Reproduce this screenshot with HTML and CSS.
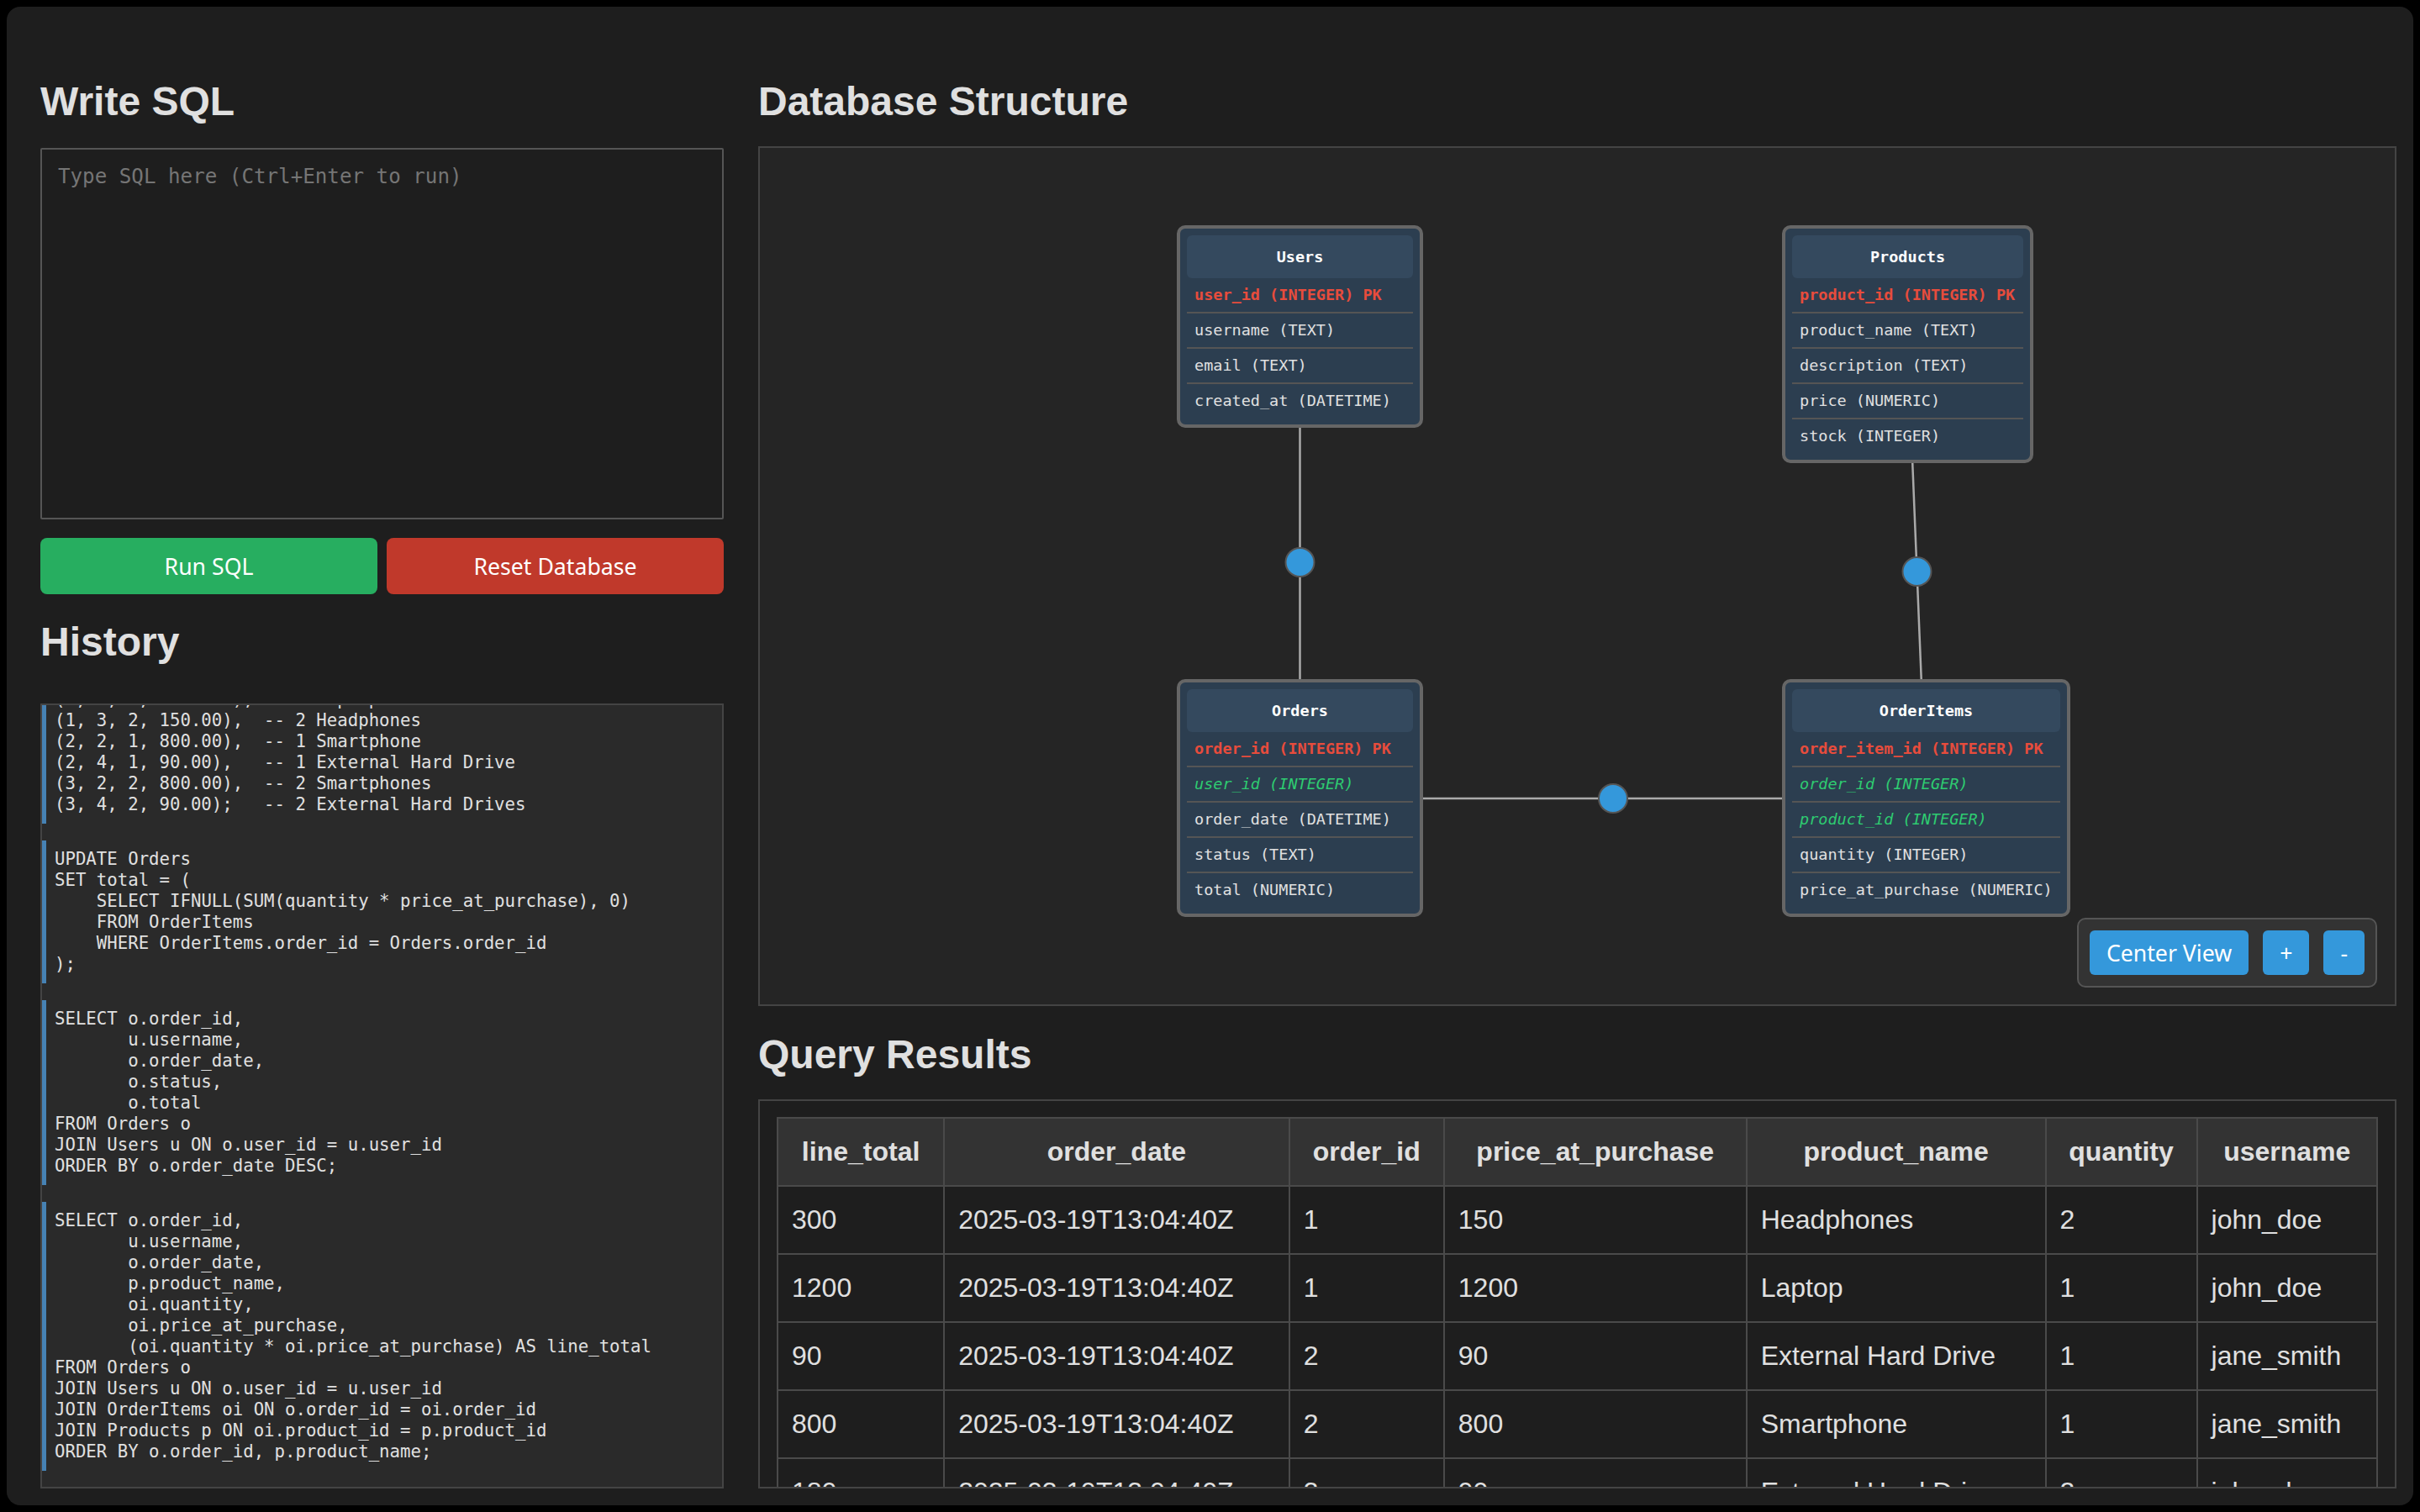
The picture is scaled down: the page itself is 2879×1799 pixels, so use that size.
FILE: index.html
```html
<!DOCTYPE html>
<html lang="en">
<head>
<meta charset="utf-8">
<title>SQL Playground</title>
<link rel="stylesheet" href="styles.css">
</head>
<body>
<div class="app">
  <section class="col col-left">
    <h2 class="title title-editor">Write SQL</h2>
    <textarea class="editor" placeholder="Type SQL here (Ctrl+Enter to run)"></textarea>
    <div class="actions">
      <button class="btn btn-run">Run SQL</button>
      <button class="btn btn-reset">Reset Database</button>
    </div>
    <h2 class="title title-history">History</h2>
    <div class="history">
<pre class="entry">SELECT o.order_id,
       u.username,
       o.order_date,
       p.product_name,
       oi.quantity,
       oi.price_at_purchase,
       (oi.quantity * oi.price_at_purchase) AS line_total
FROM Orders o
JOIN Users u ON o.user_id = u.user_id
JOIN OrderItems oi ON o.order_id = oi.order_id
JOIN Products p ON oi.product_id = p.product_id
ORDER BY o.order_id, p.product_name;</pre>
<pre class="entry">SELECT o.order_id,
       u.username,
       o.order_date,
       o.status,
       o.total
FROM Orders o
JOIN Users u ON o.user_id = u.user_id
ORDER BY o.order_date DESC;</pre>
<pre class="entry">UPDATE Orders
SET total = (
    SELECT IFNULL(SUM(quantity * price_at_purchase), 0)
    FROM OrderItems
    WHERE OrderItems.order_id = Orders.order_id
);</pre>
<pre class="entry">INSERT INTO OrderItems (order_id, product_id, quantity, price_at_purchase)
VALUES
(1, 1, 1, 1200.00), -- 1 Laptop
(1, 3, 2, 150.00),  -- 2 Headphones
(2, 2, 1, 800.00),  -- 1 Smartphone
(2, 4, 1, 90.00),   -- 1 External Hard Drive
(3, 2, 2, 800.00),  -- 2 Smartphones
(3, 4, 2, 90.00);   -- 2 External Hard Drives</pre>
<pre class="entry">INSERT INTO Orders (user_id, status)
VALUES
(1, 'shipped'),
(2, 'pending'),
(1, 'pending');</pre>
    </div>
  </section>

  <section class="col col-right">
    <h2 class="title title-diagram">Database Structure</h2>
    <div class="diagram">
      <svg class="links" xmlns="http://www.w3.org/2000/svg">
        <line x1="642.5" y1="212.5" x2="642.5" y2="774"/>
        <line x1="1365.5" y1="234" x2="1387.5" y2="774"/>
        <line x1="642.5" y1="774" x2="1387.5" y2="774"/>
        <circle cx="642.5" cy="493" r="17"/>
        <circle cx="1376.5" cy="504" r="17"/>
        <circle cx="1015" cy="774" r="17"/>
      </svg>

      <div class="node node-users">
        <div class="node-head">Users</div>
        <div class="field pk">user_id (INTEGER) PK</div>
        <div class="field">username (TEXT)</div>
        <div class="field">email (TEXT)</div>
        <div class="field">created_at (DATETIME)</div>
      </div>

      <div class="node node-products">
        <div class="node-head">Products</div>
        <div class="field pk">product_id (INTEGER) PK</div>
        <div class="field">product_name (TEXT)</div>
        <div class="field">description (TEXT)</div>
        <div class="field">price (NUMERIC)</div>
        <div class="field">stock (INTEGER)</div>
      </div>

      <div class="node node-orders">
        <div class="node-head">Orders</div>
        <div class="field pk">order_id (INTEGER) PK</div>
        <div class="field fk">user_id (INTEGER)</div>
        <div class="field">order_date (DATETIME)</div>
        <div class="field">status (TEXT)</div>
        <div class="field">total (NUMERIC)</div>
      </div>

      <div class="node node-orderitems">
        <div class="node-head">OrderItems</div>
        <div class="field pk">order_item_id (INTEGER) PK</div>
        <div class="field fk">order_id (INTEGER)</div>
        <div class="field fk">product_id (INTEGER)</div>
        <div class="field">quantity (INTEGER)</div>
        <div class="field">price_at_purchase (NUMERIC)</div>
      </div>

      <div class="controls">
        <button class="ctrl">Center View</button>
        <button class="ctrl">+</button>
        <button class="ctrl">-</button>
      </div>
    </div>

    <h2 class="title title-results">Query Results</h2>
    <div class="results">
      <table class="grid">
        <thead>
          <tr>
            <th>line_total</th>
            <th>order_date</th>
            <th>order_id</th>
            <th>price_at_purchase</th>
            <th>product_name</th>
            <th>quantity</th>
            <th>username</th>
          </tr>
        </thead>
        <tbody>
          <tr><td>300</td><td>2025-03-19T13:04:40Z</td><td>1</td><td>150</td><td>Headphones</td><td>2</td><td>john_doe</td></tr>
          <tr><td>1200</td><td>2025-03-19T13:04:40Z</td><td>1</td><td>1200</td><td>Laptop</td><td>1</td><td>john_doe</td></tr>
          <tr><td>90</td><td>2025-03-19T13:04:40Z</td><td>2</td><td>90</td><td>External Hard Drive</td><td>1</td><td>jane_smith</td></tr>
          <tr><td>800</td><td>2025-03-19T13:04:40Z</td><td>2</td><td>800</td><td>Smartphone</td><td>1</td><td>jane_smith</td></tr>
          <tr><td>180</td><td>2025-03-19T13:04:40Z</td><td>3</td><td>90</td><td>External Hard Drive</td><td>2</td><td>john_doe</td></tr>
          <tr><td>1600</td><td>2025-03-19T13:04:40Z</td><td>3</td><td>800</td><td>Smartphone</td><td>2</td><td>john_doe</td></tr>
        </tbody>
      </table>
    </div>
  </section>
</div>
</body>
</html>
```

FILE: styles.css
```css
* {
  box-sizing: border-box;
}

body {
  margin: 8px;
  background: #000;
  color: #e0e0e0;
  font-family: "Liberation Sans", Arial, sans-serif;
}

.app {
  height: calc(100vh - 16px);
  background: #1e1e1e;
  border-radius: 16px;
  padding: 20px;
  display: grid;
  grid-template-columns: 853px 1fr;
  column-gap: 21px;
  overflow: hidden;
}

.col {
  display: flex;
  flex-direction: column;
  min-height: 0;
  min-width: 0;
  padding-top: 65px;
}

.col-left {
  padding-left: 20px;
  padding-right: 20px;
}

.title {
  margin: 0;
  font-size: 48px;
  line-height: 55px;
  font-weight: bold;
  color: #e0e0e0;
  flex: none;
}

.title-editor {
  margin-bottom: 28px;
}

.title-history {
  margin-top: 29px;
  margin-bottom: 46px;
}

.title-diagram {
  margin-bottom: 26px;
}

.title-results {
  margin-top: 30px;
  margin-bottom: 26px;
}

/* Editor */
.editor {
  display: block;
  flex: none;
  width: 100%;
  height: 442px;
  margin: 0;
  padding: 18px 18px 18px 19px;
  background: #1e1e1e;
  border: 2px solid #555;
  border-radius: 2px;
  color: #e0e0e0;
  font-family: "DejaVu Sans Mono", monospace;
  font-size: 24.2px;
  line-height: 28px;
  resize: none;
  outline: none;
}

.editor::placeholder {
  color: #757575;
}

.actions {
  flex: none;
  display: flex;
  gap: 11px;
  margin-top: 22px;
}

.btn {
  flex: 1;
  height: 67px;
  margin: 0;
  padding: 0;
  border: none;
  border-radius: 8px;
  color: #fff;
  font-family: "Noto Sans", sans-serif;
  font-size: 26.67px;
  cursor: pointer;
}

.btn-run {
  background: #27ae60;
}

.btn-reset {
  background: #c0392b;
}

/* History */
.history {
  flex: 1;
  min-height: 0;
  display: flex;
  flex-direction: column-reverse;
  gap: 20px;
  padding: 19px 0 19px 0;
  background: #2a2a2a;
  border: 2px solid #444;
  overflow-y: auto;
  overflow-x: hidden;
  scrollbar-width: none;
}

.entry {
  flex: none;
  margin: 0;
  padding: 10px 10px;
  border-left: 5px solid #4682b4;
  color: #e0e0e0;
  font-family: "DejaVu Sans Mono", monospace;
  font-size: 20.7px;
  line-height: 25px;
  white-space: pre-wrap;
}

/* Diagram */
.diagram {
  position: relative;
  flex: none;
  height: 1023px;
  background: #252525;
  border: 2px solid #444;
  overflow: hidden;
}

.links {
  position: absolute;
  left: 0;
  top: 0;
  width: 100%;
  height: 100%;
}

.links line {
  stroke: #aaa;
  stroke-width: 2.5;
}

.links circle {
  fill: #3498db;
  stroke: #555;
  stroke-width: 2;
}

.node {
  position: absolute;
  padding: 8px;
  background: #2c3e50;
  border: 4px solid #666;
  border-radius: 10px;
  color: #e0e0e0;
  font-family: "DejaVu Sans Mono", monospace;
  font-size: 18.5px;
  line-height: 22px;
  white-space: nowrap;
}

.node-users {
  left: 496px;
  top: 92px;
  width: 293px;
}

.node-products {
  left: 1216px;
  top: 92px;
  width: 299px;
}

.node-orders {
  left: 496px;
  top: 632px;
  width: 293px;
}

.node-orderitems {
  left: 1216px;
  top: 632px;
  width: 343px;
}

.node-head {
  padding: 14.5px 9px;
  background: #34495e;
  border-radius: 6px;
  color: #fff;
  font-weight: bold;
  text-align: center;
}

.field {
  padding: 9px;
  border-bottom: 2px solid #555;
}

.field:last-child {
  border-bottom: none;
}

.field.pk {
  color: #e74c3c;
  font-weight: bold;
}

.field.fk {
  color: #2ecc71;
  font-style: italic;
}

.controls {
  position: absolute;
  right: 21px;
  bottom: 20px;
  display: flex;
  gap: 17px;
  padding: 13px;
  background: #333;
  border: 2px solid #555;
  border-radius: 10px;
}

.ctrl {
  height: 53px;
  margin: 0;
  padding: 0 20px;
  border: none;
  border-radius: 6px;
  background: #3498db;
  color: #fff;
  font-family: "Noto Sans", sans-serif;
  font-size: 26.67px;
  cursor: pointer;
}

/* Results */
.results {
  flex: 1;
  min-height: 0;
  padding: 19px 20px 20px;
  background: #1e1e1e;
  border: 2px solid #444;
  overflow: auto;
  scrollbar-width: none;
}

.grid {
  width: 100%;
  border-collapse: collapse;
  font-size: 32px;
  color: #e0e0e0;
}

.grid th,
.grid td {
  padding: 21px 16px;
  border: 2px solid #4a4a4a;
  white-space: nowrap;
}

.grid th {
  background: #333;
  font-weight: bold;
  text-align: center;
}

.grid td {
  text-align: left;
}
```
